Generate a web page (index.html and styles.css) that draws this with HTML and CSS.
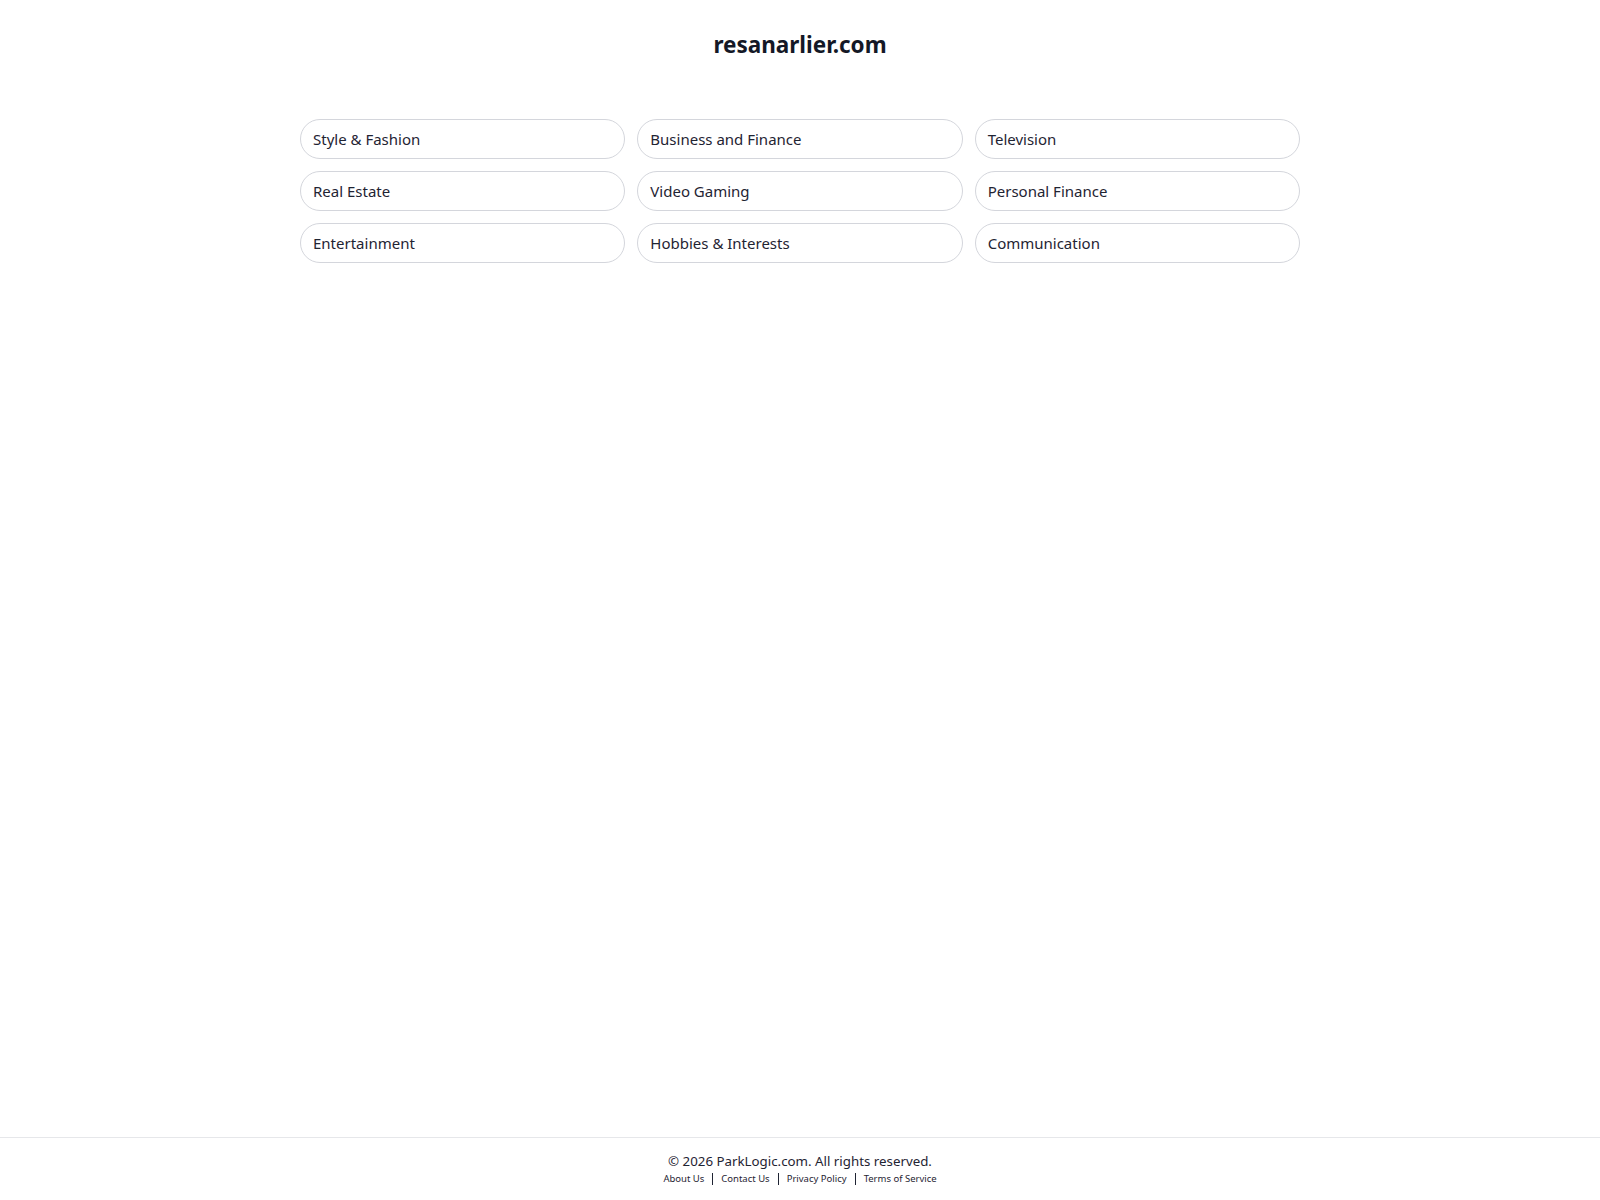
FILE: index.html
```html
<!DOCTYPE html>
<html lang="en">
<head>
<meta charset="utf-8">
<title>resanarlier.com</title>
<link rel="stylesheet" href="styles.css">
</head>
<body>
<div class="page">
  <main class="main">
    <h1 class="title">resanarlier.com</h1>
    <div class="grid">
      <a class="pill" href="#">Style &amp; Fashion</a>
      <a class="pill" href="#">Business and Finance</a>
      <a class="pill" href="#">Television</a>
      <a class="pill" href="#">Real Estate</a>
      <a class="pill" href="#">Video Gaming</a>
      <a class="pill" href="#">Personal Finance</a>
      <a class="pill" href="#">Entertainment</a>
      <a class="pill" href="#">Hobbies &amp; Interests</a>
      <a class="pill" href="#">Communication</a>
    </div>
  </main>
  <footer class="footer">
    <div class="copy">© 2026 ParkLogic.com. All rights reserved.</div>
    <nav class="links">
      <a href="#">About Us</a>
      <a href="#">Contact Us</a>
      <a href="#">Privacy Policy</a>
      <a href="#">Terms of Service</a>
    </nav>
  </footer>
</div>
</body>
</html>
```
FILE: styles.css
```css
html, body {
  margin: 0;
  padding: 0;
  background: #ffffff;
}
body {
  font-family: "Noto Sans", "Open Sans", "DejaVu Sans", sans-serif;
  color: #1f2433;
}
.page {
  min-height: 100vh;
  display: flex;
  flex-direction: column;
}
.main {
  flex: 1;
  display: flex;
  flex-direction: column;
  align-items: center;
}
.title {
  margin: 29px 0 0;
  font-size: 22.5px;
  line-height: 32px;
  font-weight: 700;
  color: #141826;
}
.grid {
  margin-top: 58px;
  width: 1000px;
  display: grid;
  grid-template-columns: repeat(3, 1fr);
  gap: 12px;
}
.pill {
  display: flex;
  align-items: center;
  height: 40px;
  box-sizing: border-box;
  padding: 0 12px;
  border: 1px solid #d4d6dc;
  border-radius: 20px;
  font-size: 15px;
  color: #1f2433;
  text-decoration: none;
}
.footer {
  border-top: 1px solid #e6e7ea;
  padding: 13px 0 15px;
  display: flex;
  flex-direction: column;
  align-items: center;
}
.copy {
  font-size: 13.3px;
  line-height: 20px;
  color: #1f2433;
}
.links {
  display: flex;
  align-items: center;
  margin-top: 2px;
}
.links a {
  font-size: 9.5px;
  line-height: 12px;
  color: #1f2433;
  text-decoration: none;
  padding: 0 8px;
  border-left: 1.5px solid #1f2433;
}
.links a:first-child {
  border-left: none;
}
```
